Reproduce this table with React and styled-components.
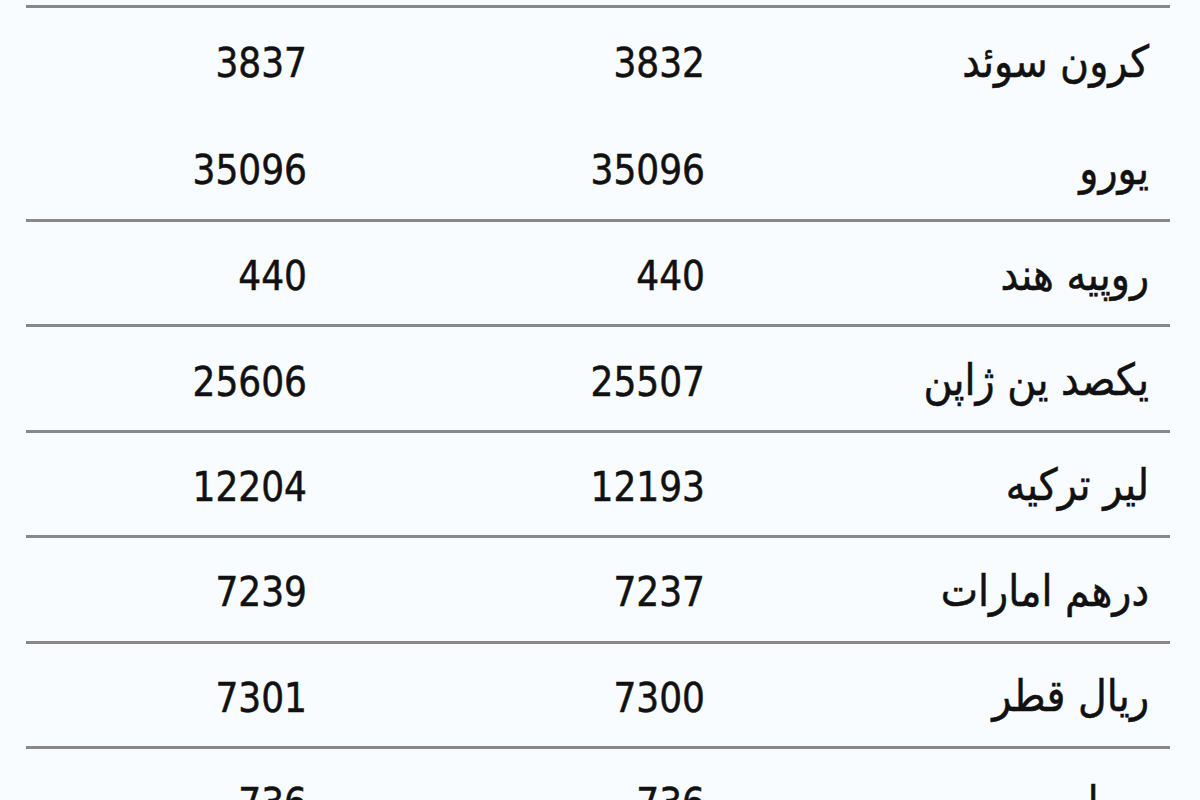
import styled, { createGlobalStyle } from "styled-components";

const GlobalStyle = createGlobalStyle`
  html, body {
    margin: 0;
    padding: 0;
    background: #f8fcfe;
  }
`;

const Page = styled.div`
  width: 1200px;
  height: 800px;
  overflow: hidden;
  padding: 5px 30px 0 26px;
  box-sizing: border-box;
  background: #f8fcfe;
`;

const Table = styled.div`
  display: flex;
  flex-direction: column;
  border-top: 3px solid #888;
  direction: rtl;
  font-family: "DejaVu Sans Condensed", "DejaVu Sans", Tahoma, sans-serif;
  font-size: 40px;
  color: #111;
  -webkit-text-stroke: 0.5px #111;
`;

const Row = styled.div`
  display: grid;
  grid-template-columns: 443px 398px 303px;
  align-items: center;
  height: ${(p) => p.$h}px;
  border-bottom: 3px solid ${(p) => (p.$noLine ? "transparent" : "#888")};
`;

const Cell = styled.div`
  text-align: right;
  padding-right: 22px;
  padding-top: 6px;
  white-space: nowrap;
`;

const NameCell = styled(Cell)`
  font-size: 44px;
  padding-right: 21px;
  padding-top: 2px;
`;

const rates = [
  { name: "کرون سوئد", buy: "3832", sell: "3837", noLine: true, h: 104 },
  { name: "یورو", buy: "35096", sell: "35096", h: 104 },
  { name: "روپیه هند", buy: "440", sell: "440" },
  { name: "یکصد ین ژاپن", buy: "25507", sell: "25606" },
  { name: "لیر ترکیه", buy: "12193", sell: "12204" },
  { name: "درهم امارات", buy: "7237", sell: "7239" },
  { name: "ریال قطر", buy: "7300", sell: "7301" },
  { name: "روبل روسیه", buy: "736", sell: "736" },
];

export default function App() {
  return (
    <Page>
      <GlobalStyle />
      <Table>
        {rates.map((r) => (
          <Row key={r.name} $noLine={r.noLine} $h={r.h || 102.4}>
            <NameCell>{r.name}</NameCell>
            <Cell>{r.buy}</Cell>
            <Cell>{r.sell}</Cell>
          </Row>
        ))}
      </Table>
    </Page>
  );
}
